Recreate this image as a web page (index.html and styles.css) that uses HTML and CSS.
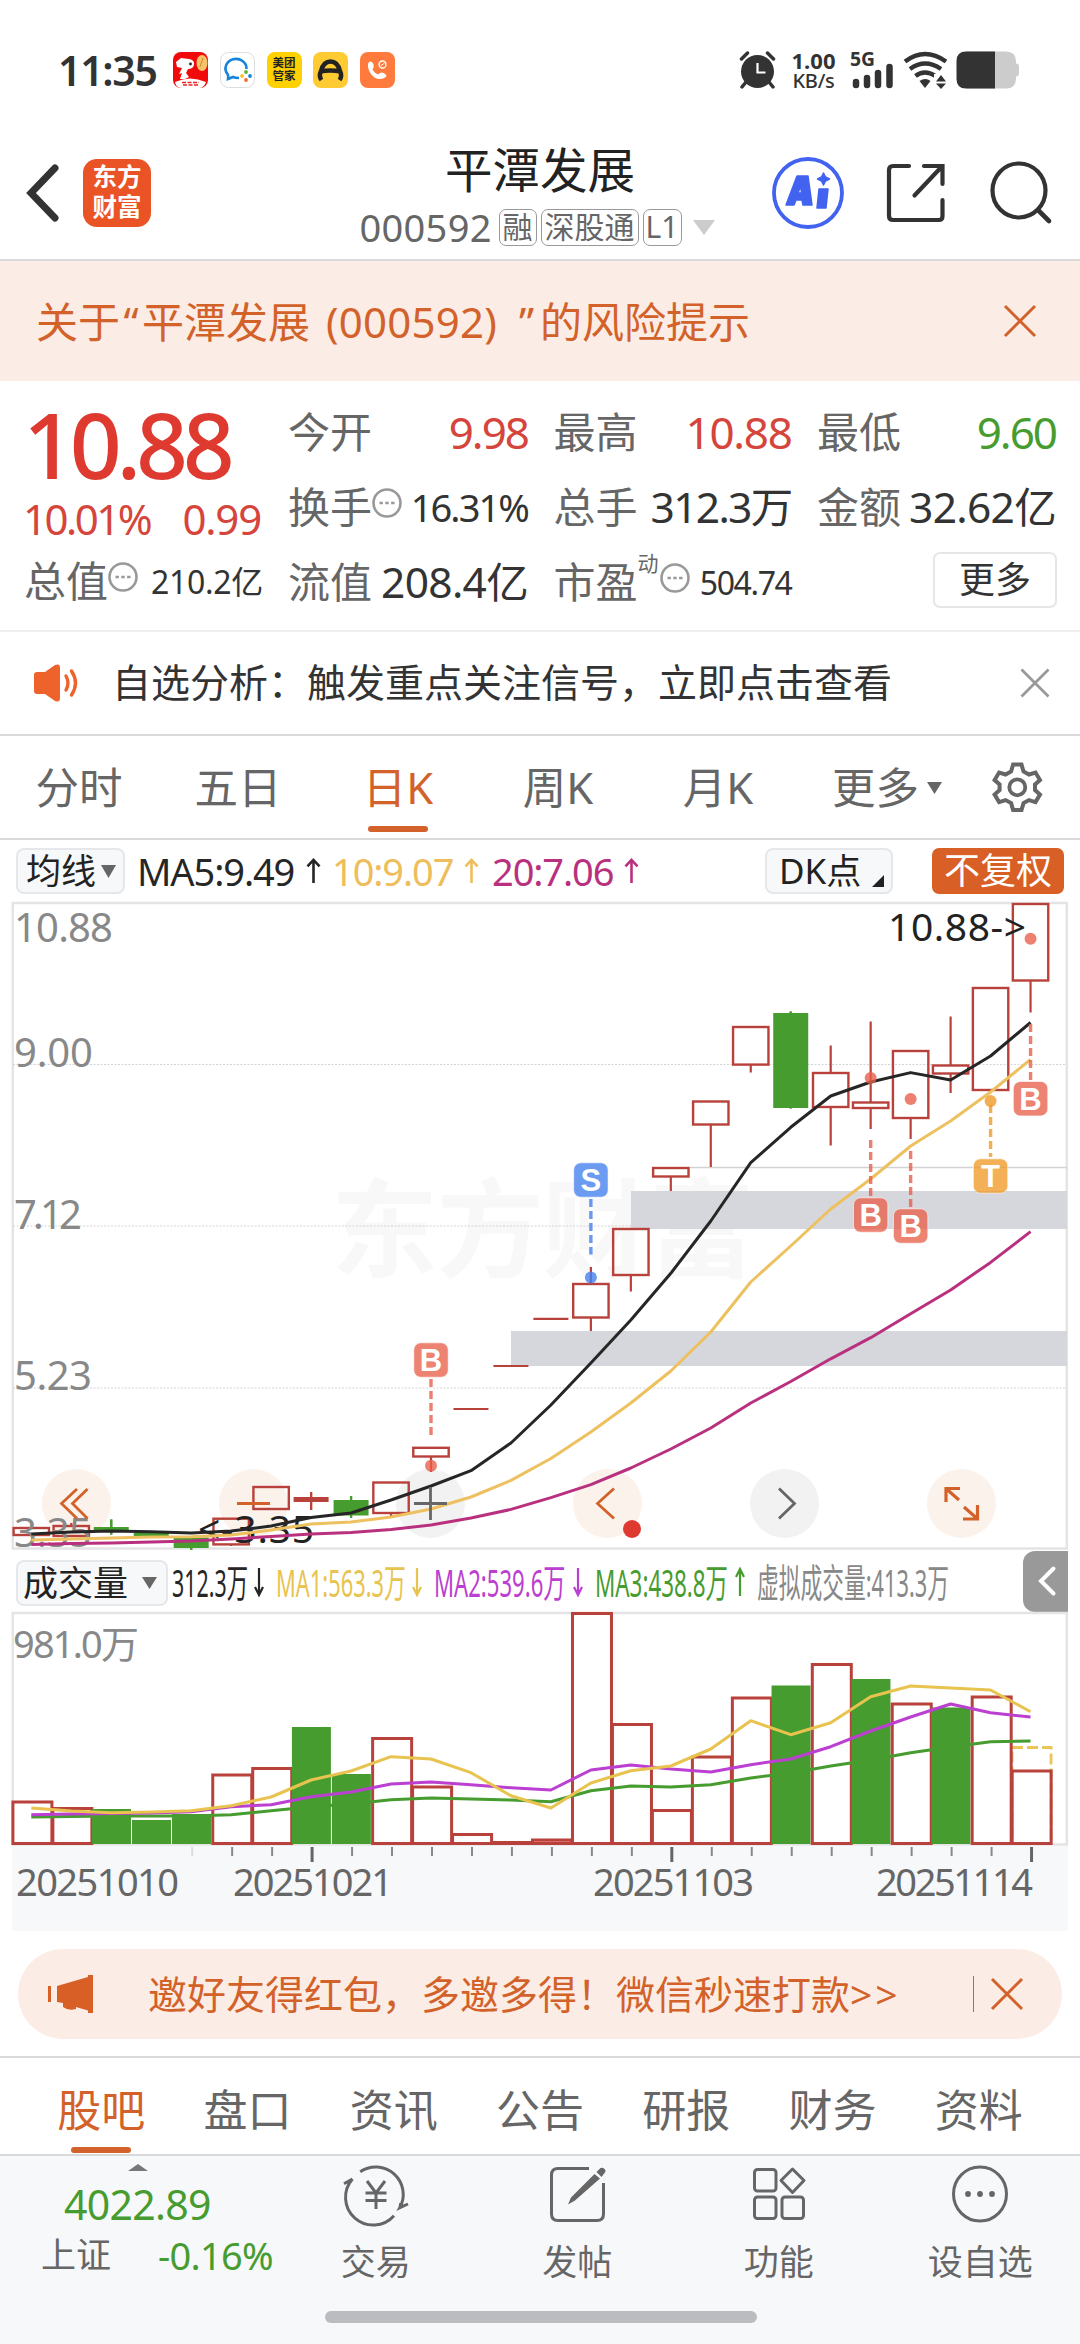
FILE: index.html
```html
<!DOCTYPE html>
<html lang="zh-CN">
<head>
<meta charset="utf-8">
<title>平潭发展 000592</title>
<link rel="stylesheet" href="styles.css">
</head>
<body>
<div class="app">
  <div class="status">
    <span class="clock">11:35</span>
    <div class="apps">
      <svg width="35" height="36" viewBox="0 0 35 36"><rect width="35" height="36" rx="8" fill="#f10a0a"/><path d="M2 30Q17 23 33 30Q31 36 26 36H9Q3 36 2 30Z" fill="#fff"/><path d="M3 10l5-4 8 1q6 1 5 6-1 4-6 4l-2 4 3 4-4 2H7l2-6-3 1 3-6-5-1z" fill="#fff"/><circle cx="17.500" cy="12" r="1.400" fill="#222"/><ellipse cx="29" cy="11" rx="5.500" ry="8" fill="#f6c36b"/><path d="M30 6l-3 9" stroke="#c98a2a"/><path d="M9 30.500h17M10 33h15" stroke="#e22" stroke-width="1.600" stroke-dasharray="4 1.500"/></svg>
      <svg width="35" height="36" viewBox="0 0 35 36"><rect x=".5" y=".5" width="34" height="35" rx="8" fill="#fff" stroke="#ddd"/><path d="M26.500 17a10.500 9.500 0 1 0-19 5q1 1 .5 5l5-2q2 1 6 1" fill="none" stroke="#1683dd" stroke-width="2.600"/><circle cx="26" cy="20" r="1.900" fill="#5cb531"/><circle cx="30" cy="24" r="1.900" fill="#1683dd"/><circle cx="26" cy="28" r="1.900" fill="#f26b32"/><circle cx="22" cy="24" r="1.900" fill="#fbc02d"/></svg>
      <span class="mt">美团<br>管家</span>
      <svg width="35" height="36" viewBox="0 0 35 36"><rect width="35" height="36" rx="8" fill="#ffcb33"/><path d="M8.500 28q-3-4-.5-9Q10.500 9.500 17.500 9.500T27 19q2.500 5-.5 9M7 19.500q10-2 21 0" fill="none" stroke="#222" stroke-width="4.500"/></svg>
      <svg width="35" height="36" viewBox="0 0 35 36"><rect width="35" height="36" rx="8" fill="#ff7b3d"/><path d="M10 9.500q2.500 0 3.500 3t-1 5q2 4 6 5 2-3 5-1.500t3 3q-2 3-7 3-5 0-8.500-5T8 12.500q0-2 2-3z" fill="#fff"/><circle cx="22.500" cy="12.500" r="3.500" fill="none" stroke="#fff" stroke-width="1.300"/><path d="M20.500 14l4-3" stroke="#fff"/></svg>
    </div>
    <div class="signals">
      <svg width="37" height="38" viewBox="0 0 37 38"><circle cx="18.500" cy="20.500" r="16.500" fill="#333"/><path d="M2.500 8l6-6M34.500 8l-6-6M7 31l-4 5M30 31l4 5" stroke="#333" stroke-width="3.500" stroke-linecap="round"/><path d="M18.500 12v9.500h8" fill="none" stroke="#fff" stroke-width="2.200"/></svg>
      <span class="speed"><b>1.00</b><b>KB/s</b></span>
      <svg class="cell" width="44" height="38" viewBox="0 0 44 38"><text x="-1" y="15" class="g5" textLength="25" lengthAdjust="spacingAndGlyphs">5G</text><path d="M5 31v3M16 27v7M27 22v12M38.500 16v18" stroke="#333" stroke-width="6.500" stroke-linecap="round"/></svg>
      <svg width="45" height="38" viewBox="0 0 45 38"><g fill="none" stroke="#333" stroke-width="4.400"><path d="M2 10.500q20-15 41 0"/><path d="M7 18q15-11 31 0"/><path d="M12.500 25q9-7 20 0"/></g><path d="M16.500 30q6-4 11 0l-5.500 7z" fill="#333"/><path d="M31 23h14v15H31z" fill="#fff"/><path d="M33 30.500l5-6.500 5 6.500zM33 32.500h10l-5 5.500z" fill="#333"/></svg>
      <svg width="64" height="38" viewBox="0 0 64 38"><path d="M10 .5h40q10 0 10 10v2q3 0 3 3v7q0 3-3 3v2q0 10-10 10H10z" fill="#ccc"/><path d="M10 .5H39v37H10Q.5 37.500.5 28V10Q.5.5 10 .5z" fill="#333"/></svg>
    </div>
  </div>

  <header class="top">
    <svg class="back" width="36" height="60" viewBox="0 0 36 60"><path d="M32 5L8 30l24 25" fill="none" stroke="#333" stroke-width="7" stroke-linecap="round"/></svg>
    <div class="logo">东方<br>财富</div>
    <div class="title">
      <h1>平潭发展</h1>
      <div class="sub"><span class="code">000592</span><i class="t1">融</i><i class="t3">深股通</i><i class="t2">L1</i><svg width="22" height="15" viewBox="0 0 22 15"><path d="M0 0h22L11 15z" fill="#ccc"/></svg></div>
    </div>
    <div class="acts">
      <svg width="74" height="76" viewBox="0 0 74 76"><circle cx="37" cy="38" r="34" fill="none" stroke="#4262f0" stroke-width="3.800"/><path d="M15 50L26 21h11l4 29h-9l-1-5h-6l-2 5zM27 38h3.500l-.8-7zM48 34h9l-2 19h-9zM52.500 18l2 4 4 2-4 2-2 4-2-4-4-2 4-2z" fill="#4262f0" stroke="#4262f0" stroke-width="1.500" stroke-linejoin="round" fill-rule="evenodd"/></svg>
      <svg class="share" width="62" height="62" viewBox="0 0 62 62"><path d="M24 4H8q-4 0-4 4v46q0 4 4 4h46q3.500 0 3.500-4V38M57.500 22V4H39M55 6.500L29.500 33.500" fill="none" stroke="#333" stroke-width="4.200" stroke-linecap="round"/></svg>
      <svg width="62" height="62" viewBox="0 0 62 62"><ellipse cx="29" cy="28.500" rx="26.500" ry="27" fill="none" stroke="#333" stroke-width="4.200"/><path d="M48 48l11 11" stroke="#333" stroke-width="4.600" stroke-linecap="round"/></svg>
    </div>
  </header>

  <div class="risk">
    <p>关于<span class="q1">“</span>平潭发展<span class="par">(000592)</span><span class="q2">”</span>的风险提示</p>
    <svg width="34" height="34" viewBox="0 0 34 34"><path d="M2 2l30 30M32 2L2 32" stroke="#d3622a" stroke-width="3"/></svg>
  </div>

  <section class="quote">
    <div class="main">
      <div class="price">10.88</div>
      <div class="chg"><span class="pc">10.01%</span><span>0.99</span></div>
      <div class="cell-row r3"><label>总值</label><svg class="dots" viewBox="0 0 30 30"><circle cx="15" cy="15" r="13.500"/><path d="M7.500 15h3.400M13.300 15h3.400M19.100 15h3.400"/></svg><span class="v s1">210.2亿</span></div>
    </div>
    <div class="grid">
      <div class="cell-row"><label>今开</label><span class="v red">9.98</span></div>
      <div class="cell-row"><label>最高</label><span class="v red t">10.88</span></div>
      <div class="cell-row"><label>最低</label><span class="v green">9.60</span></div>
      <div class="cell-row"><label>换手</label><svg class="dots" viewBox="0 0 30 30"><circle cx="15" cy="15" r="13.500"/><path d="M7.500 15h3.400M13.300 15h3.400M19.100 15h3.400"/></svg><span class="v s2">16.31%</span></div>
      <div class="cell-row"><label>总手</label><span class="v w1">312.3万</span></div>
      <div class="cell-row"><label>金额</label><span class="v w">32.62亿</span></div>
      <div class="cell-row"><label>流值</label><span class="v w">208.4亿</span></div>
      <div class="cell-row"><label>市盈</label><sup>动</sup><svg class="dots" viewBox="0 0 30 30"><circle cx="15" cy="15" r="13.500"/><path d="M7.500 15h3.400M13.300 15h3.400M19.100 15h3.400"/></svg><span class="v s3">504.74</span></div>
      <div class="cell-row end"><button>更多</button></div>
    </div>
  </section>

  <div class="notice">
    <svg width="46" height="38" viewBox="0 0 46 38"><path d="M4 8h8L22 1q5-2 5 3v30q0 5-5 3l-10-7H4q-3 0-3-3V11q0-3 3-3z" fill="#ee622b"/><path d="M33 12q4 7 0 14M38.500 7q8 12 0 24" fill="none" stroke="#ee622b" stroke-width="3.400" stroke-linecap="round"/></svg>
    <p>自选分析：触发重点关注信号，立即点击查看</p>
    <svg width="30" height="30" viewBox="0 0 30 30"><path d="M1.500 1.500l27 27M28.500 1.500l-27 27" stroke="#999" stroke-width="2.800"/></svg>
  </div>

  <nav class="periods">
    <span>分时</span><span>五日</span><span class="on">日K</span><span>周K</span><span>月K</span><span class="more">更多<svg width="15" height="12" viewBox="0 0 15 12"><path d="M0 0h15L7.500 12z" fill="#666"/></svg></span>
    <svg width="54" height="54" viewBox="0 0 54 54"><path d="M23.100 4.500L31.500 4.500 33.500 11.500 39 14.500 45.500 12.500 50 20 45 24.500 45 30.100 50 34.600 45.500 42.100 39 40.100 33.500 43.100 31.500 50.100 23.100 50.100 21.100 43.100 15.600 40.100 9.100 42.100 4.600 34.600 9.600 30.100 9.600 24.500 4.600 20 9.100 12.500 15.600 14.500 21.100 11.500z" fill="none" stroke="#666" stroke-width="4"/><circle cx="27.300" cy="27.300" r="8" fill="none" stroke="#666" stroke-width="3.800"/></svg>
  </nav>

  <div class="ma">
    <span class="box b1">均线<svg width="15" height="13" viewBox="0 0 15 13"><path d="M0 0h15L7.500 13z" fill="#666"/></svg></span>
    <span class="m m1">MA5:9.49<svg class="ar" viewBox="0 0 16 28"><path d="M8 27V2M1.500 9L8 2l6.500 7"/></svg></span>
    <span class="m m2">10:9.07<svg class="ar" viewBox="0 0 16 28"><path d="M8 27V2M1.500 9L8 2l6.500 7"/></svg></span>
    <span class="m m3">20:7.06<svg class="ar" viewBox="0 0 16 28"><path d="M8 27V2M1.500 9L8 2l6.500 7"/></svg></span>
    <span class="box b2">DK点<svg width="12" height="12" viewBox="0 0 12 12"><path d="M12 0v12H0z" fill="#222"/></svg></span>
    <span class="b3">不复权</span>
  </div>

  <svg class="kline" width="1080" height="655" viewBox="0 900 1080 655">
    <g class="wm"><text x="331" y="1269" textLength="424">东方财富</text></g>
    <g fill="none" stroke="#e4e4e6" stroke-width="2.500"><rect x="12.800" y="903" width="1054" height="645.500"/></g>
    <path d="M13 1064.500H1067M13 1226H1067M13 1388H1067" stroke="#d4d4d4" stroke-width="1" stroke-dasharray="2 1.500"/>
    <path d="M690 1167.500H1067" stroke="#d3d3d3" stroke-width="1.300"/>
    <path d="M631 1191H1067V1229H631zM511 1331H1067V1366H511z" fill="#d6d7dc"/>
    <g id="pads">
      <circle cx="76.400" cy="1503.500" r="34.500" fill="#fbf2ec"/><circle cx="253.400" cy="1503.500" r="34.500" fill="#fbf2ec"/><circle cx="430.400" cy="1503.500" r="34.500" fill="#f2f2f3"/><circle cx="607.500" cy="1503.500" r="34.500" fill="#fbf2ec"/><circle cx="784.500" cy="1503.500" r="34.500" fill="#f2f2f3"/><circle cx="961.500" cy="1503.500" r="34.500" fill="#fbf2ec"/>
    </g>
    <g class="axis"><text x="14" y="942" textLength="99">10.88</text><text x="14" y="1066.500" textLength="79">9.00</text><text x="14" y="1228.500" textLength="68">7.12</text><text x="14" y="1389.500" textLength="78">5.23</text></g>
    <g id="candles"></g>
    <g class="axis"><text x="14" y="1547" textLength="78">3.35</text></g>
    <g class="peak"><text x="888" y="941" textLength="138">10.88-&gt;</text><text x="198" y="1542.500" textLength="116">&lt;-3.35</text></g>
    <g id="averages"></g>
    <g id="marks"></g>
    <g fill="none" stroke="#d3622a" stroke-width="2.800">
      <path d="M77 1489L61.500 1503.500 77 1518.500M87.500 1489L72.500 1503.500 87.500 1518.500M237 1503.500H270M614 1488.500L597.500 1503.500 614 1518.500"/>
      <path d="M414 1503.500H447M430.500 1487V1520M779 1488.500L794.500 1503.500 779 1518.500" stroke="#666"/>
      <path d="M960 1488.500H946V1502M946.500 1489L959 1500M964 1507L976.500 1518M963 1519H977.500V1505" stroke-width="3.200"/>
    </g>
    <circle cx="632" cy="1529" r="9" fill="#de3a30"/>
  </svg>

  <div class="volhead">
    <span class="box b4">成交量<svg width="15" height="12" viewBox="0 0 15 12"><path d="M0 0h15L7.500 12z" fill="#666"/></svg></span>
    <svg class="vt" width="800" height="56" viewBox="170 1555 800 56">
      <text x="171" y="1596.500" textLength="76" lengthAdjust="spacingAndGlyphs" fill="#262626">312.3万</text>
      <text x="275" y="1596.500" textLength="130" lengthAdjust="spacingAndGlyphs" fill="#e8c34f">MA1:563.3万</text>
      <text x="433" y="1596.500" textLength="131.500" lengthAdjust="spacingAndGlyphs" fill="#bb3fd0">MA2:539.6万</text>
      <text x="594" y="1596.500" textLength="133" lengthAdjust="spacingAndGlyphs" fill="#479c30">MA3:438.8万</text>
      <text x="756" y="1596.500" textLength="192" lengthAdjust="spacingAndGlyphs" fill="#888">虚拟成交量:413.3万</text>
      <g fill="none" stroke-width="2.200"><path d="M258 1568v27M254 1587l4 8 4-8" stroke="#262626"/><path d="M416 1568v27M412 1587l4 8 4-8" stroke="#e8c34f"/><path d="M577 1568v27M573 1587l4 8 4-8" stroke="#bb3fd0"/><path d="M739 1596v-27M735 1577l4-8 4 8" stroke="#479c30"/></g>
    </svg>
    <span class="fold"><svg width="18" height="30" viewBox="0 0 18 30"><path d="M15.500 2.500L3 15l12.500 12.500" fill="none" stroke="#fff" stroke-width="4" stroke-linecap="round"/></svg></span>
  </div>

  <svg class="volume" width="1080" height="322" viewBox="0 1610 1080 322">
    <rect x="12" y="1846" width="1056" height="85" fill="#f7f8fa"/>
    <rect x="12.800" y="1613" width="1054" height="231.500" fill="none" stroke="#e4e4e6" stroke-width="2.500"/>
    <g class="axis"><text x="13" y="1658" textLength="126">981.0万</text></g>
    <g id="bars"></g>
    <g id="volavg"></g>
    <g id="ticks"></g>
    <g class="date"><text x="16" y="1896" textLength="163">20251010</text><text x="233" y="1896" textLength="160">20251021</text><text x="593" y="1896" textLength="161">20251103</text><text x="876" y="1896" textLength="157">20251114</text></g>
  </svg>

  <div class="promo">
    <svg width="46" height="40" viewBox="0 0 46 40"><path d="M1.500 12v16" stroke="#d85f26" stroke-width="3"/><path d="M9 12L40 3V1h5v38h-5v-2.500l-12-3.500v2q-8 2-13-2v-4l-6-1z" fill="#d85f26"/></svg>
    <p>邀好友得红包，多邀多得！微信秒速打款<em>&gt;&gt;</em></p>
    <i></i>
    <svg width="34" height="34" viewBox="0 0 34 34"><path d="M2 2l30 30M32 2L2 32" stroke="#d3622a" stroke-width="3"/></svg>
  </div>

  <nav class="tabs"><span class="on">股吧</span><span>盘口</span><span>资讯</span><span>公告</span><span>研报</span><span>财务</span><span>资料</span></nav>

  <footer class="bottom">
    <div class="index">
      <svg width="20" height="7" viewBox="0 0 20 7"><path d="M0 7h20L10 0z" fill="#777"/></svg>
      <div class="pt">4022.89</div>
      <div class="sz"><span>上证</span><b>-0.16%</b></div>
    </div>
    <div class="item"><svg width="66" height="60" viewBox="0 0 66 60"><g fill="none" stroke="#666" stroke-width="3"><path d="M17.200 8.700A27.500 27.500 0 0 1 56.800 44.700L65 41M9.500 16A27.500 27.500 0 0 0 51 52.700M1 20.700L9.500 16M56.800 45l1-5"/><path d="M24 18l9 12 9-12M22.500 30h21M22.500 37.500h21M33 30v16" /></g></svg><span>交易</span></div>
    <div class="item"><svg width="66" height="60" viewBox="0 0 66 60"><path d="M45 5.500H14q-6.500 0-6.500 6.500v39q0 6.500 6.500 6.500h39q6.500 0 6.500-6.500V20" fill="none" stroke="#666" stroke-width="3"/><path d="M50.500 11l5.500 4.500-25 22-7 4 3-7zM52.500 9l4-4q2-1 4 1t0 4l-3 4z" fill="#666"/></svg><span>发帖</span></div>
    <div class="item"><svg width="66" height="60" viewBox="0 0 66 60"><g fill="none" stroke="#666" stroke-width="3"><rect x="8.500" y="6.500" width="21.500" height="21.500" rx="3"/><rect x="8.500" y="34" width="21.500" height="21.500" rx="3"/><rect x="36" y="34" width="21.500" height="21.500" rx="3"/><path d="M46.500 6l11.500 11.500-11.500 12-11.500-12z" stroke-linejoin="round"/></g></svg><span>功能</span></div>
    <div class="item"><svg width="66" height="60" viewBox="0 0 66 60"><ellipse cx="33" cy="31" rx="26.500" ry="27" fill="none" stroke="#666" stroke-width="3"/><g fill="#666"><circle cx="21" cy="31" r="2.900"/><circle cx="33" cy="31" r="2.900"/><circle cx="45" cy="31" r="2.900"/></g></svg><span>设自选</span></div>
    <div class="home"></div>
  </footer>
</div>
<script src="chart.js"></script>
</body>
</html>
```
FILE: styles.css
```css
* { box-sizing: border-box; margin: 0; padding: 0; }
body { width: 1080px; background: #fff; font-family: "Noto Sans", "Noto Sans CJK SC", sans-serif; color: #333; }
svg { display: block; flex: none; overflow: visible; }
i, em { font-style: normal; }
.app { width: 1080px; height: 2344px; overflow: hidden; display: flex; flex-direction: column; }
.app > * { flex: none; }
.red { color: #d5453c; }
.green { color: #479c30; }

.status { height: 140px; padding: 0 60px 0 58px; display: flex; align-items: center; }
.clock { font-size: 41px; font-weight: 600; letter-spacing: -1.300px; width: 115px; white-space: nowrap; line-height: 60px; }
.apps { display: flex; gap: 11.800px; flex: 1; }
.mt { width: 35px; height: 36px; border-radius: 8px; background: #ffd100; color: #222; font-size: 11.500px; line-height: 12.500px; font-weight: 700; text-align: center; padding-top: 5px; }
.signals { display: flex; align-items: center; }
.speed { margin-left: 15px; width: 45px; display: flex; flex-direction: column; align-items: center; gap: 1px; }
.speed b { font-size: 22px; line-height: 20px; font-weight: 700; }
.speed b + b { font-size: 20px; font-weight: 500; letter-spacing: -.3px; }
.cell { margin: 0 8px 0 15px; }
.cell + svg { margin-right: 8px; }
.g5 { font-size: 19px; font-weight: 700; fill: #333; }

.top { height: 121px; display: grid; grid-template-columns: 83px 250px 414px 333px; border-bottom: 2px solid #d9d9db; }
.back { margin: 23px 0 0 23px; }
.logo { width: 68px; height: 68px; margin-top: 19px; border-radius: 14px; background: #ea5326; color: #fff; font-size: 24.500px; line-height: 30px; font-weight: 700; text-align: center; padding-top: 3px; }
.title { display: flex; flex-direction: column; align-items: center; }
.title h1 { font-size: 47.500px; font-weight: 400; line-height: 60px; color: #222; }
.sub { display: flex; align-items: center; height: 38px; margin-top: 8px; gap: 4px; color: #666; padding-right: 6px; }
.code { font-size: 38px; line-height: 38px; letter-spacing: .3px; width: 134px; margin-right: 1px; }
.sub i { height: 37px; border: 1.500px solid #999; border-radius: 7px; font-size: 30px; line-height: 33px; text-align: center; }
.t1 { width: 38px; } .t3 { width: 98px; } .t2 { width: 39px; }
.sub svg { margin-left: 7px; }
.acts { display: flex; align-items: center; gap: 41px; padding-left: 24px; height: 106px; }
.acts .share { margin: 0 2px 0 -1px; }

.risk { height: 120px; background: #fbede5; color: #d3622a; display: flex; justify-content: space-between; align-items: center; padding: 0 43px 0 36px; }
.risk p { font-size: 42px; line-height: 60px; white-space: nowrap; display: flex; padding-top: 2px; }
.q1 { width: 22px; text-align: center; }
.par { width: 203px; text-align: center; letter-spacing: .2px; }
.q2 { width: 27px; text-align: center; }

.quote { height: 249px; padding: 13px 24px 0 24px; display: flex; }
.main { width: 264px; }
.price { font-size: 91px; font-weight: 500; color: #de3a30; line-height: 100px; letter-spacing: -5.300px; margin-left: -1px; }
.chg { height: 50px; line-height: 50px; font-size: 42px; color: #d5453c; display: flex; justify-content: space-between; width: 238px; letter-spacing: -1.200px; margin-left: -1px; }
.chg .pc { letter-spacing: -2.500px; }
.grid { flex: 1; display: grid; grid-template-columns: 239px 237px 238px; column-gap: 26.500px; grid-template-rows: 75px 75px 75px; }
.cell-row { display: flex; align-items: center; height: 76px; font-size: 42px; line-height: 60px; white-space: nowrap; }
.cell-row label { color: #666; }
.main .cell-row { width: 238px; }
.v { margin-left: auto; font-size: 44px; letter-spacing: -2px; margin-right: -1px; }
.v.t { letter-spacing: -1.300px; }
.v.w { font-size: 42.500px; letter-spacing: -.7px; }
.v.w1 { font-size: 42.500px; letter-spacing: -1.700px; }
.v.s1 { font-size: 32px; letter-spacing: -.3px; padding-top: 1px; }
.v.s2 { font-size: 38px; letter-spacing: -1.900px; }
.v.s3 { font-size: 32px; letter-spacing: -1.400px; padding-top: 1px; }
.dots { width: 30px; height: 30px; margin: -8px 0 0 0; fill: none; stroke: #999; stroke-width: 2.600; }
.cell-row sup { font-size: 21px; line-height: 22px; color: #666; margin: -38px 1px 0 0; }
.end { justify-content: flex-end; }
.end button { width: 124px; height: 56px; border: 2px solid #e6e6e8; border-radius: 7px; background: #fff; font: inherit; font-size: 36px; line-height: 52px; color: #333; margin-right: -2px; margin-top: -5px; }
.r3 { margin-top: -1px; }

.notice { height: 106px; border-top: 2px solid #efefef; border-bottom: 2px solid #d9d9db; display: flex; align-items: center; padding: 0 30px 0 33px; }
.notice p { margin: -2px 0 0 33px; flex: 1; font-size: 39px; line-height: 60px; white-space: nowrap; }
.notice svg { margin-top: -1px; }

.periods { height: 104px; border-bottom: 2px solid #d9d9db; display: grid; grid-template-columns: 158px repeat(4, 160px) 191px 54px; font-size: 43.500px; line-height: 103px; color: #666; }
.periods > span { position: relative; text-align: center; }
.periods > svg { margin: 24px 0 0 1px; }
.periods .more { display: flex; align-items: center; padding-left: 34px; gap: 8px; }
.on { color: #d3622a; }
.on::after { content: ""; position: absolute; left: 50%; margin-left: -30px; bottom: 7px; width: 60px; height: 6px; border-radius: 3px; background: #d3622a; }

.ma { height: 60px; display: flex; align-items: center; padding: 2px 16px 0; }
.box { height: 46px; border: 2px solid #e6e7ea; border-radius: 8px; background: #f7f8fa; display: flex; align-items: center; font-size: 35px; line-height: 42px; color: #222; white-space: nowrap; }
.b1 { width: 109px; padding-left: 8px; gap: 5px; }
.m { display: flex; align-items: center; font-size: 38px; line-height: 46px; letter-spacing: -1.100px; white-space: nowrap; justify-content: space-between; }
.ar { width: 15px; height: 26px; fill: none; stroke: currentColor; stroke-width: 2.800; }
.m1 { width: 184px; margin-left: 12px; color: #262626; }
.m2 { width: 147px; margin-left: 11px; color: #eebd5c; }
.m3 { width: 147px; margin-left: 13px; color: #b9317e; }
.b2 { width: 128px; margin-left: auto; padding-left: 12px; letter-spacing: 0; }
.b2 svg { margin: 20px 0 0 11px; }
.b3 { width: 132px; height: 46px; margin-left: 39px; border-radius: 7px; background: #d85f26; color: #fff; font-size: 36px; line-height: 45px; text-align: center; }

.kline .wm text { font-size: 107px; font-weight: 700; fill: #f8f8f8; font-family: "Noto Sans CJK SC", sans-serif; }
.axis text { fill: #888; font-size: 40px; }
.peak text { fill: #222; font-size: 39px; }
.kline .tag { fill: #fff; font-size: 31px; font-weight: 700; text-anchor: middle; font-family: "Liberation Sans", sans-serif; }

.volhead { height: 55px; display: flex; align-items: center; padding: 0 12px 0 16px; }
.b4 { width: 152px; padding-left: 5px; gap: 14px; }
.vt { margin-left: 3px; font-size: 39px; }
.fold { margin-left: auto; width: 45px; height: 61px; background: #999; border-radius: 12px 0 0 12px; padding: 15px 0 0 15px; align-self: flex-start; margin-top: -4px; }
.volume .axis text { font-size: 38px; }
.volume .date text { font-size: 38px; fill: #666; }

.promo { width: 1044px; height: 90px; margin: 17px 18px; border-radius: 45px; background: #fbede5; color: #d3622a; display: flex; align-items: center; padding: 0 38px 0 30px; }
.promo p { margin-left: 54px; flex: 1; font-size: 39px; line-height: 60px; margin-top: -1px; white-space: nowrap; }
.promo em { letter-spacing: 3px; }
.promo i { width: 1.500px; height: 36px; background: #d3622a; margin-right: 16px; }

.tabs { height: 100px; border-top: 2px solid #d9d9db; border-bottom: 2px solid #d9d9db; padding: 0 28px; display: grid; grid-template-columns: repeat(7, 1fr); font-size: 44px; line-height: 96px; color: #666; }
.tabs span { position: relative; text-align: center; padding-top: 4px; height: 96px; }
.tabs .on { color: #d3622a; }
.tabs .on::after { bottom: 1px; }

.bottom { flex: 1; background: #f7f8fa; display: grid; grid-template-columns: 275px repeat(4, 201.500px); grid-template-rows: 150px 1fr; }
.index { padding: 8px 0 0 41px; color: #479c30; }
.index svg { margin-left: 87px; }
.pt { font-size: 41px; line-height: 50px; letter-spacing: -.7px; margin: 8px 0 0 23px; }
.sz { display: flex; justify-content: space-between; font-size: 35px; line-height: 52px; width: 232px; }
.sz span { color: #666; }
.sz b { font-weight: 400; font-size: 38px; letter-spacing: -.7px; }
.item { display: flex; flex-direction: column; align-items: center; color: #666; font-size: 35px; line-height: 46px; padding-top: 7px; gap: 16px; }
.home { grid-column: 1 / -1; justify-self: center; width: 432px; height: 12px; border-radius: 6px; background: #bbbcbf; margin-top: 5px; }
```
FILE: chart.js
```js
const RED = '#b8423b', GREEN = '#479c30';
const X = i => 31.3 + i * 39.97;
const put = (id, s) => { document.getElementById(id).innerHTML = s; };

// [open/close top, bottom, wick top, wick bottom, kind]
const candles = [
  [1528,1535,1528,1535,'r'],[1526,1536,1523,1536,'r'],[1527,1531,1519.5,1534.5,'g'],[1533,1536,1533,1536,'g'],
  [1537.5,1548,1537,1550,'g'],[1518.7,1544.4,1518.7,1546,'r'],[1487,1509,1487,1509,'r'],[1497,1502,1492,1510,'f'],
  [1500,1515.5,1496,1518,'g'],[1482.5,1513,1482.5,1518,'r'],[1447.8,1456.5,1447.8,1472,'r'],[1409,1409,1409,1409,'l'],
  [1366,1366,1366,1366,'l'],[1318.8,1318.8,1318.8,1318.8,'l'],[1284,1317.5,1267,1331,'r'],[1229,1275,1229,1291.5,'r'],
  [1168,1176.5,1168,1191,'r'],[1101.5,1124.5,1101.5,1167,'r'],[1027,1064.6,1027,1072.5,'r'],[1013,1108,1011.5,1108.5,'g'],
  [1073,1107,1045.6,1145.5,'r'],[1102.5,1108,1021.6,1129,'r'],[1051,1118,1051,1139,'r'],[1065.5,1073.5,1016.5,1093,'r'],
  [988,1090,988,1090,'r'],[904,980.5,904,1012.5,'r']
];
put('candles', candles.map(([t, b, wt, wb, k], i) => {
  const x = X(i), c = k === 'g' ? GREEN : RED;
  if (k === 'l') return `<path d="M${x - 17.5} ${t}h35" stroke="${c}" stroke-width="2.2"/>`;
  const w = `<path d="M${x} ${wt}V${t}M${x} ${b}V${wb}" stroke="${c}" stroke-width="2.2"/>`;
  if (k === 'g' || k === 'f') return w + `<path d="M${x} ${wt}V${wb}" stroke="${c}" stroke-width="2.2"/><rect x="${x - 17.5}" y="${t}" width="35" height="${b - t}" fill="${c}"/>`;
  return w + `<rect x="${x - 17.7}" y="${t}" width="35.4" height="${b - t}" fill="none" stroke="${c}" stroke-width="2.4"/>`;
}).join(''));

const line = (ys, c, w) => `<polyline points="${ys.map((y, i) => X(i) + ',' + y).join(' ')}" fill="none" stroke="${c}" stroke-width="${w}" stroke-linejoin="round"/>`;
put('averages',
  line([1544.4,1543.5,1543,1542,1541,1539,1536.4,1534,1532.6,1529.6,1525,1518,1509.4,1497.6,1484.6,1468,1449,1428,1403,1381.5,1358.8,1337.7,1313.7,1290,1262.4,1231.6], '#b9317e', 3) +
  line([1540,1539,1538,1537,1536.8,1535,1530,1524,1522,1517,1509,1497,1480.4,1458.5,1432,1403,1371,1332,1282,1246,1209,1179,1146,1121,1092,1059.5], '#edc060', 3) +
  line([1534,1532,1531,1531.7,1533,1531,1526,1517.5,1513,1500,1486,1470.7,1443,1405,1363,1320,1273.3,1221,1162.6,1127.3,1096,1082,1072.6,1080,1056,1022.5], '#262626', 3));

// [index, letter, badge y, dash from, dash to, dot y, colour]
const marks = [
  [10,'B',1360,1379,1435,1465.7,'#e8604c'],[14,'S',1180,1199,1254.5,1277.5,'#437fee'],
  [21,'B',1215,1140,1196,1078,'#e8604c'],[22,'B',1226,1151,1207,1099,'#e8604c'],
  [24,'T',1176,1105,1157,1101,'#f09a28'],[25,'B',1098.7,1024,1080,938.7,'#e8604c']
];
put('marks', marks.map(([i, l, y, a, b, d, c]) => {
  const x = X(i);
  return `<path d="M${x} ${a}V${b}" stroke="${c}" opacity=".8" stroke-width="3.4" stroke-dasharray="8 4"/>` +
    `<circle cx="${x}" cy="${d}" r="6" fill="${c}" opacity=".8"/>` +
    `<rect x="${x - 17.2}" y="${y - 17.2}" width="34.4" height="34.4" rx="7" fill="${c}" fill-opacity=".78" stroke="#fff" stroke-opacity=".6"/>` +
    `<text class="tag" x="${x}" y="${y + 11}">${l}</text>`;
}).join(''));

const tops = [1802,1808.5,1809,1820,1814,1775,1768.5,1727,1774,1738.5,1787,1834.5,1842.5,1840,1613.5,1724.5,1810.5,1757,1698,1685.5,1664.5,1679,1704,1707.5,1697,1771];
const green = [2, 3, 4, 7, 8, 19, 21, 23];
put('bars', `<rect x="${X(25) - 18.5}" y="1747.5" width="39" height="96" fill="none" stroke="#ebc656" stroke-width="2.8" stroke-dasharray="11 4"/>` + tops.map((t, i) => {
  const x = X(i);
  return green.includes(i)
    ? `<rect x="${x - 19.2}" y="${t}" width="39" height="${1844 - t}" fill="${GREEN}"/>`
    : `<rect x="${x - 18.4}" y="${t}" width="39" height="${1843.5 - t}" fill="${i === 13 ? '#f99' : 'none'}" stroke="${RED}" stroke-width="3"/>`;
}).join(''));
put('volavg',
  line([1817,1816.5,1816,1816,1816,1814.7,1810.7,1806.7,1804,1799.7,1798,1799,1800,1801.7,1790.7,1786,1787,1784.7,1778,1773,1766,1760,1752.7,1747,1741.7,1741], GREEN, 3) +
  line([1814.7,1814,1813.5,1813,1811.7,1806.7,1804.7,1796.7,1792,1784,1782,1784.7,1787.7,1790,1770,1765,1769,1772,1764.7,1759,1746.7,1731,1717,1704,1712.7,1717], '#bb3fd0', 3) +
  line([1808,1811,1812.7,1812,1810.7,1805.7,1797,1780,1771,1756.7,1759,1772.7,1795.7,1808,1783,1770.7,1766,1749,1720.7,1734.7,1722.7,1696.7,1686,1688,1690,1711.7], '#e8c34f', 3));
put('ticks', Array.from({ length: 22 }, (_, k) => {
  const i = k + 4, big = [7, 16, 25].includes(i);
  return `<path d="M${X(i) + 1} 1847v${big ? 15 : 9}" stroke="${i === 4 ? '#ddd' : big ? '#666' : '#888'}" stroke-width="${big ? 3 : 2}"/>`;
}).join(''));
```
